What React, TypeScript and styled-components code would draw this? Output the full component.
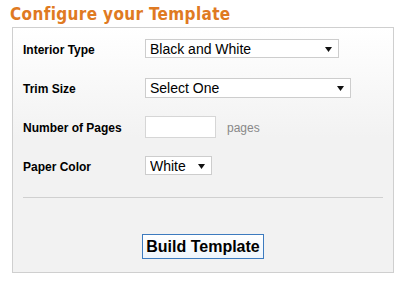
import React from "react";
import styled, { createGlobalStyle } from "styled-components";

const GlobalStyle = createGlobalStyle`
  html, body {
    margin: 0;
    padding: 0;
    background: #ffffff;
  }
`;

type SelectProps = { width: number; height: number };

const Page = styled.div`
  padding: 5px 0 0 10px;
  width: 407px;
  box-sizing: border-box;
`;

const Title = styled.h2`
  margin: 0 0 3px 0;
  font-family: "DejaVu Sans Condensed", "DejaVu Sans", sans-serif;
  font-weight: bold;
  font-size: 17px;
  letter-spacing: 0.35px;
  line-height: 19px;
  color: #df7a22;
`;

const Panel = styled.div`
  margin-left: 2px;
  width: 382px;
  height: 246px;
  box-sizing: border-box;
  border: 1px solid #cfcfcf;
  background: linear-gradient(180deg, #ffffff 0px, #f2f2f2 110px, #f2f2f2 100%);
  padding: 1px 10px 0 10px;
  display: flex;
  flex-direction: column;
`;

const Row = styled.div`
  display: grid;
  grid-template-columns: 122px auto;
  align-items: center;
  height: 39px;
`;

const Label = styled.label`
  font-family: "Liberation Sans", Arial, sans-serif;
  font-weight: bold;
  font-size: 12px;
  color: #000000;
  padding-top: 3px;
`;

const Field = styled.div`
  display: flex;
  align-items: center;
  gap: 11px;
`;

const SelectWrap = styled.div<SelectProps>`
  position: relative;
  width: ${(p) => p.width}px;
  height: ${(p) => p.height}px;
`;

const Select = styled.select`
  appearance: none;
  -webkit-appearance: none;
  width: 100%;
  height: 100%;
  box-sizing: border-box;
  margin: 0;
  border: 1px solid #cdcdcd;
  border-radius: 0;
  background: #ffffff;
  padding: 0 0 0 4px;
  font-family: "Liberation Sans", Arial, sans-serif;
  font-size: 14px;
  color: #000000;
  outline: none;
`;

const Arrow = styled.svg`
  position: absolute;
  right: 7px;
  top: 50%;
  margin-top: -2px;
  pointer-events: none;
`;

const NumberInput = styled.input`
  width: 71px;
  height: 22px;
  box-sizing: border-box;
  margin: 0;
  border: 1px solid #d6d6d6;
  background: #ffffff;
  font-family: "Liberation Sans", Arial, sans-serif;
  font-size: 13px;
`;

const Unit = styled.span`
  font-family: "Liberation Sans", Arial, sans-serif;
  font-size: 12px;
  color: #888888;
  padding-top: 3px;
`;

const Divider = styled.hr`
  margin: 12px 0 0 0;
  border: none;
  border-top: 1px solid #d0d0d0;
  height: 0;
`;

const Actions = styled.div`
  display: flex;
  justify-content: center;
  margin-top: 36px;
`;

const BuildButton = styled.button`
  width: 122px;
  height: 25px;
  box-sizing: border-box;
  margin: 0;
  padding: 0;
  border: 1px solid #3d7bbf;
  border-radius: 0;
  background: linear-gradient(180deg, #ffffff, #eef5fc);
  font-family: "Liberation Sans", Arial, sans-serif;
  font-weight: bold;
  font-size: 16px;
  color: #000000;
  cursor: pointer;
`;

function DropDown({ width, height, value, options }: { width: number; height: number; value: string; options: string[] }) {
  return (
    <SelectWrap width={width} height={height}>
      <Select defaultValue={value}>
        {options.map((o) => (
          <option key={o}>{o}</option>
        ))}
      </Select>
      <Arrow width="7" height="5" viewBox="0 0 7 5">
        <polygon points="0,0 7,0 3.5,5" fill="#111111" />
      </Arrow>
    </SelectWrap>
  );
}

export default function App() {
  return (
    <>
      <GlobalStyle />
      <Page>
        <Title>Configure your Template</Title>
        <Panel>
          <Row>
            <Label>Interior Type</Label>
            <Field>
              <DropDown width={194} height={19} value="Black and White" options={["Black and White", "Color"]} />
            </Field>
          </Row>
          <Row>
            <Label>Trim Size</Label>
            <Field>
              <DropDown width={206} height={20} value="Select One" options={["Select One", "6 x 9", "8.5 x 11"]} />
            </Field>
          </Row>
          <Row>
            <Label>Number of Pages</Label>
            <Field>
              <NumberInput type="text" />
              <Unit>pages</Unit>
            </Field>
          </Row>
          <Row>
            <Label>Paper Color</Label>
            <Field>
              <DropDown width={67} height={19} value="White" options={["White", "Cream"]} />
            </Field>
          </Row>
          <Divider />
          <Actions>
            <BuildButton>Build Template</BuildButton>
          </Actions>
        </Panel>
      </Page>
    </>
  );
}
